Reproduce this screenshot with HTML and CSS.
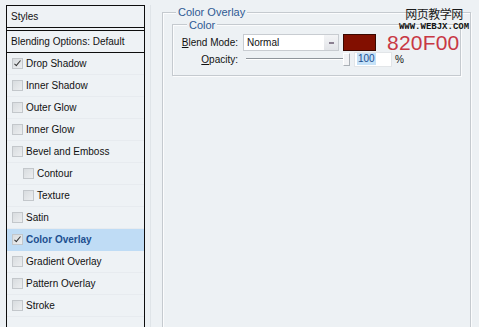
FILE: index.html
```html
<!DOCTYPE html>
<html>
<head>
<meta charset="utf-8">
<link rel="stylesheet" href="styles.css">
</head>
<body>
<div class="wrap">
  <div class="panel">
    <div class="hdr">Styles</div>
    <div class="blendopt">Blending Options: Default</div>
    <div class="row"><span class="cb on"></span>Drop Shadow</div>
    <div class="row"><span class="cb"></span>Inner Shadow</div>
    <div class="row"><span class="cb"></span>Outer Glow</div>
    <div class="row"><span class="cb"></span>Inner Glow</div>
    <div class="row"><span class="cb"></span>Bevel and Emboss</div>
    <div class="row sub"><span class="cb"></span>Contour</div>
    <div class="row sub"><span class="cb"></span>Texture</div>
    <div class="row"><span class="cb"></span>Satin</div>
    <div class="row sel"><span class="cb on"></span>Color Overlay</div>
    <div class="row"><span class="cb"></span>Gradient Overlay</div>
    <div class="row"><span class="cb"></span>Pattern Overlay</div>
    <div class="row"><span class="cb"></span>Stroke</div>
  </div>
  <div class="right">
    <div class="fs outer">
      <div class="legend">Color Overlay</div>
      <div class="fs inner">
        <div class="legend">Color</div>
        <div class="frow r1">
          <div class="lbl"><u>B</u>lend Mode:</div>
          <div class="select"><span class="sv">Normal</span><span class="arrow"><span class="dash"></span></span></div>
          <div class="swatch"></div>
          <div class="hex">820F00</div>
        </div>
        <div class="frow r2">
          <div class="lbl"><u>O</u>pacity:</div>
          <div class="slider"><span class="track"></span><span class="thumb"></span></div>
          <div class="num"><span class="hl">100</span></div>
          <div class="pct">%</div>
        </div>
      </div>
    </div>
  </div>
</div>
<div class="wm">
  <div class="wm1">网页教学网</div>
  <div class="wm2">WWW.WEBJX.COM</div>
</div>
</body>
</html>
```
FILE: styles.css
```css
html, body {
  margin: 0;
  padding: 0;
}
body {
  width: 479px;
  height: 327px;
  overflow: hidden;
  background: #edf1f4;
  font-family: "Liberation Sans", Arial, sans-serif;
  font-size: 10px;
  color: #111;
  position: relative;
}
.wrap {
  display: flex;
  padding: 5px 0 0 6px;
  height: 322px;
}
.panel {
  width: 137px;
  border: 1px solid #0d0d0d;
  border-bottom: none;
  background: #eef2f5;
  flex: none;
  height: 321px;
  overflow: hidden;
}
.hdr {
  height: 21px;
  line-height: 21px;
  padding-left: 4px;
  border-bottom: 1px solid #0d0d0d;
}
.blendopt {
  margin-top: 2px;
  height: 21px;
  line-height: 21px;
  padding-left: 4px;
  border-top: 1px solid #0d0d0d;
  border-bottom: 1px solid #0d0d0d;
}
.row {
  height: 22px;
  display: flex;
  align-items: center;
  padding-left: 5px;
  border-bottom: 1px solid #e7ebef;
  box-sizing: border-box;
}
.row.sub {
  padding-left: 16px;
}
.row.sel {
  background: #bfdcf5;
  color: #1d4f8f;
  font-weight: bold;
  border-bottom-color: #bfdcf5;
}
.cb {
  width: 9px;
  height: 9px;
  border: 1px solid #c3c7cb;
  background: linear-gradient(135deg, #d8dcdf, #eceef0);
  margin-right: 3px;
  position: relative;
  flex: none;
}
.cb.on::after {
  content: "";
  position: absolute;
  left: 3px;
  top: 0px;
  width: 2px;
  height: 6px;
  border: solid #333;
  border-width: 0 1.5px 1.5px 0;
  transform: rotate(40deg);
}
.right {
  margin-left: 5px;
  border-left: 1px solid #dfe4e8;
  padding-left: 11px;
  padding-top: 7px;
  flex: 1;
  height: 315px;
}
.fs {
  border: 1px solid #c5cacf;
  box-shadow: inset 1px 1px 0 #fbfcfd, 1px 1px 0 #fbfcfd;
  box-sizing: border-box;
}
.outer {
  width: 309px;
  height: 315px;
  padding-left: 9px;
  border-bottom: none;
}
.legend {
  display: block;
  width: fit-content;
  background: #edf1f4;
  padding: 0 2px;
  height: 12px;
  line-height: 12px;
  color: #2f5a93;
  font-size: 11px;
}
.outer > .legend {
  margin-top: -7px;
  margin-left: 4px;
}
.inner {
  width: 289px;
  height: 52px;
  margin-top: 6px;
  padding-left: 1px;
}
.inner > .legend {
  margin-top: -6px;
  margin-left: 13px;
}
.frow {
  display: flex;
  align-items: center;
}
.r1 {
  margin-top: 3px;
  height: 17px;
}
.r2 {
  height: 16px;
}
.lbl {
  width: 64px;
  text-align: right;
  margin-right: 5px;
  font-size: 10px;
}
.select {
  width: 94px;
  height: 15px;
  border: 1px solid #c8ccd1;
  background: #fff;
  display: flex;
  align-items: center;
  justify-content: space-between;
}
.sv {
  padding-left: 3px;
}
.arrow {
  width: 14px;
  height: 15px;
  background: linear-gradient(#f3f4f6, #e2e4e8);
  display: flex;
  align-items: center;
  justify-content: center;
}
.dash {
  width: 5px;
  height: 2px;
  background: #8a7f90;
}
.swatch {
  width: 31px;
  height: 15px;
  margin-left: 4px;
  background: #820f00;
  border: 1px solid #3a0800;
}
.hex {
  margin-left: 11px;
  font-size: 21px;
  color: #c83844;
  letter-spacing: 0.2px;
  line-height: 17px;
  margin-top: 0;
}
.slider {
  width: 104px;
  height: 14px;
  margin-left: 3px;
  margin-right: 4px;
  position: relative;
}
.track {
  position: absolute;
  left: 0;
  right: 0;
  top: 6px;
  height: 1px;
  background: #8f959b;
  border-bottom: 1px solid #fff;
}
.thumb {
  position: absolute;
  right: 0;
  top: 1px;
  width: 5px;
  height: 11px;
  background: #f2f3f5;
  border: 1px solid #a9afb5;
  border-left-color: #fff;
  border-top-color: #fff;
}
.num {
  width: 34px;
  height: 13px;
  background: #fff;
  border: 1px solid #e2e5e8;
  display: flex;
  align-items: center;
  padding-left: 2px;
  box-sizing: content-box;
}
.hl {
  background: #c6e2f8;
  color: #1d4f8f;
  padding: 0 1px;
  line-height: 12px;
}
.pct {
  margin-left: 3px;
}
.wm {
  position: absolute;
  left: 398px;
  top: 7px;
  width: 72px;
  text-align: center;
}
.wm1 {
  font-family: "Noto Sans CJK SC", sans-serif;
  font-size: 12px;
  line-height: 14px;
  color: #1a1a1a;
  letter-spacing: -0.5px;
}
.wm2 {
  font-family: "Liberation Mono", monospace;
  font-weight: bold;
  font-size: 9px;
  line-height: 8px;
  margin-top: 2px;
  color: #111;
}
```
